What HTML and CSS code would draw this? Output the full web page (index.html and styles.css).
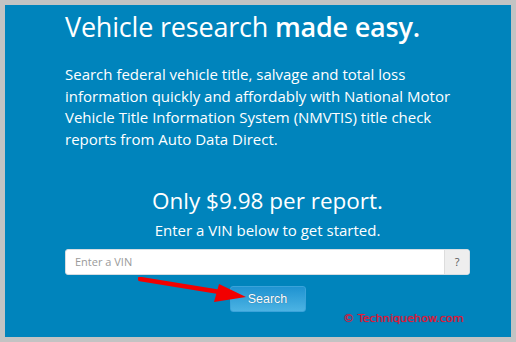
FILE: index.html
```html
<!DOCTYPE html>
<html lang="en">
<head>
<meta charset="utf-8">
<title>Vehicle research made easy</title>
<link rel="stylesheet" href="styles.css">
</head>
<body>
<div class="frame">
  <section class="hero">
    <h1 class="title">Vehicle research <strong>made easy.</strong></h1>
    <p class="lead">Search federal vehicle title, salvage and total loss information quickly and affordably with National Motor Vehicle Title Information System (NMVTIS) title check reports from Auto Data Direct.</p>
    <div class="pricing">
      <h2 class="price">Only $9.98 per report.</h2>
      <p class="prompt">Enter a VIN below to get started.</p>
    </div>
    <form class="vin-form">
      <div class="input-group">
        <input class="vin-input" type="text" placeholder="Enter a VIN">
        <span class="addon">?</span>
      </div>
      <button class="search-btn" type="button">Search</button>
    </form>
  </section>
  <svg class="arrow" width="120" height="30" viewBox="0 0 120 30">
    <line x1="2" y1="2" x2="88" y2="16" stroke="#f20000" stroke-width="4.5" stroke-linecap="round"/>
    <polygon points="81,7 108,20 76,25" fill="#f20000"/>
  </svg>
  <div class="watermark">© Techniquehow.com</div>
</div>
</body>
</html>
```

FILE: styles.css
```css
html, body {
  margin: 0;
  padding: 0;
}
body {
  background: #c3c3c3;
  width: 516px;
  height: 342px;
  padding: 5px;
  box-sizing: border-box;
  font-family: "Open Sans", "DejaVu Sans", sans-serif;
}
.frame {
  position: relative;
  background: #0084bc;
  height: 332px;
  overflow: hidden;
}
.hero {
  width: 405px;
  margin-left: 60px;
  padding-top: 3px;
  color: #ffffff;
}
.title {
  margin: 0;
  font-size: 27px;
  font-weight: 400;
  line-height: normal;
  letter-spacing: -0.2px;
}
.title strong {
  font-weight: 600;
}
.lead {
  margin: 19px 0 0;
  font-size: 15px;
  line-height: 21.7px;
}
.pricing {
  margin-top: 34px;
  text-align: center;
}
.price {
  margin: 0;
  font-size: 22.5px;
  font-weight: 400;
  line-height: normal;
}
.prompt {
  margin: 4px 0 0;
  font-size: 15px;
  line-height: normal;
}
.vin-form {
  margin-top: 9px;
  display: flex;
  flex-direction: column;
  align-items: center;
  gap: 11px;
}
.input-group {
  display: flex;
  width: 405px;
  height: 26px;
  background: #ffffff;
  border-radius: 3px;
  overflow: hidden;
  box-sizing: border-box;
  border: 1px solid #d6dde2;
}
.vin-input {
  flex: 1;
  border: 0;
  outline: 0;
  padding: 0 9px;
  font-family: "Open Sans", "DejaVu Sans", sans-serif;
  font-size: 11px;
  color: #555;
  background: transparent;
}
.vin-input::placeholder {
  color: #9a9a9a;
}
.addon {
  width: 24px;
  background: #eeeeee;
  border-left: 1px solid #dddddd;
  color: #555;
  font-size: 11px;
  display: flex;
  align-items: center;
  justify-content: center;
}
.search-btn {
  width: 76px;
  height: 26px;
  margin: 0;
  padding: 0;
  border: 1px solid #3aa3da;
  border-radius: 3px;
  background: linear-gradient(to bottom, #1f93d1, #4cb3e3);
  color: #ffffff;
  font-family: "Liberation Sans", Arial, sans-serif;
  font-size: 12.5px;
  text-shadow: 0 0 1px rgba(0, 40, 80, 0.6);
}
.arrow {
  position: absolute;
  left: 133px;
  top: 272px;
}
.watermark {
  position: absolute;
  left: 338px;
  top: 307px;
  font-family: "DejaVu Sans", Verdana, sans-serif;
  font-size: 11.2px;
  color: #ea1c3e;
  text-shadow: 0 0 1px #8a1030;
}
```
